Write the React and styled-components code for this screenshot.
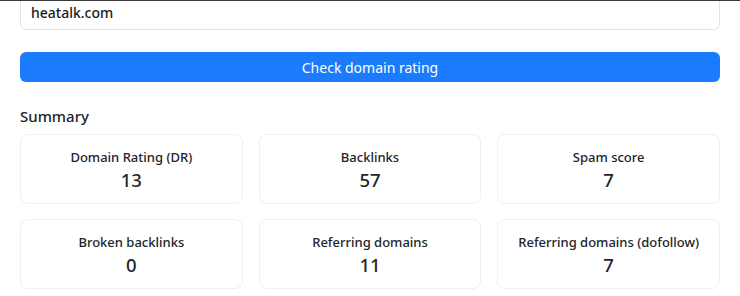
import React, { useState } from "react";
import styled, { createGlobalStyle } from "styled-components";

const GlobalStyle = createGlobalStyle`
  html, body {
    margin: 0;
    background: #fff;
  }
  body {
    font-family: "Noto Sans", "Open Sans", sans-serif;
    color: #212529;
    overflow: hidden;
  }
`;

const Page = styled.div`
  border-top: 1px solid #3a3a3a;
  padding: 0 20px;
  height: 295px;
  overflow: hidden;
`;

const DomainInput = styled.input`
  display: block;
  box-sizing: border-box;
  width: 100%;
  height: 36px;
  margin-top: -7px;
  padding: 0 10px;
  border: 1px solid #e3e3e3;
  border-radius: 6px;
  font-family: inherit;
  font-size: 14px;
  font-weight: 500;
  color: #1a1a1a;
  outline: none;
`;

const CheckButton = styled.button`
  display: block;
  width: 100%;
  height: 30px;
  margin-top: 22px;
  border: none;
  border-radius: 6px;
  background: #1a7cfc;
  color: #fff;
  font-family: inherit;
  font-size: 14px;
  cursor: pointer;
`;

const Heading = styled.h3`
  margin: 23px 0 7px;
  font-size: 15px;
  font-weight: 500;
  line-height: 22px;
`;

const Grid = styled.div`
  display: grid;
  grid-template-columns: repeat(3, 1fr);
  column-gap: 16px;
  row-gap: 15px;
`;

const Card = styled.div`
  box-sizing: border-box;
  height: 70px;
  border: 1px solid #f0f0f0;
  border-radius: 8px;
  display: flex;
  flex-direction: column;
  align-items: center;
  justify-content: center;
  padding-top: 2px;
`;

const Label = styled.div`
  font-size: 13px;
  font-weight: 500;
  line-height: 20px;
`;

const Value = styled.div`
  font-size: 18.5px;
  font-weight: 500;
  line-height: 26px;
`;

const stats = [
  { label: "Domain Rating (DR)", value: 13 },
  { label: "Backlinks", value: 57 },
  { label: "Spam score", value: 7 },
  { label: "Broken backlinks", value: 0 },
  { label: "Referring domains", value: 11 },
  { label: "Referring domains (dofollow)", value: 7 },
];

export default function App() {
  const [domain, setDomain] = useState("heatalk.com");

  return (
    <>
      <GlobalStyle />
      <Page>
        <DomainInput value={domain} onChange={(e) => setDomain(e.target.value)} />
        <CheckButton>Check domain rating</CheckButton>
        <Heading>Summary</Heading>
        <Grid>
          {stats.map((s) => (
            <Card key={s.label}>
              <Label>{s.label}</Label>
              <Value>{s.value}</Value>
            </Card>
          ))}
        </Grid>
      </Page>
    </>
  );
}
